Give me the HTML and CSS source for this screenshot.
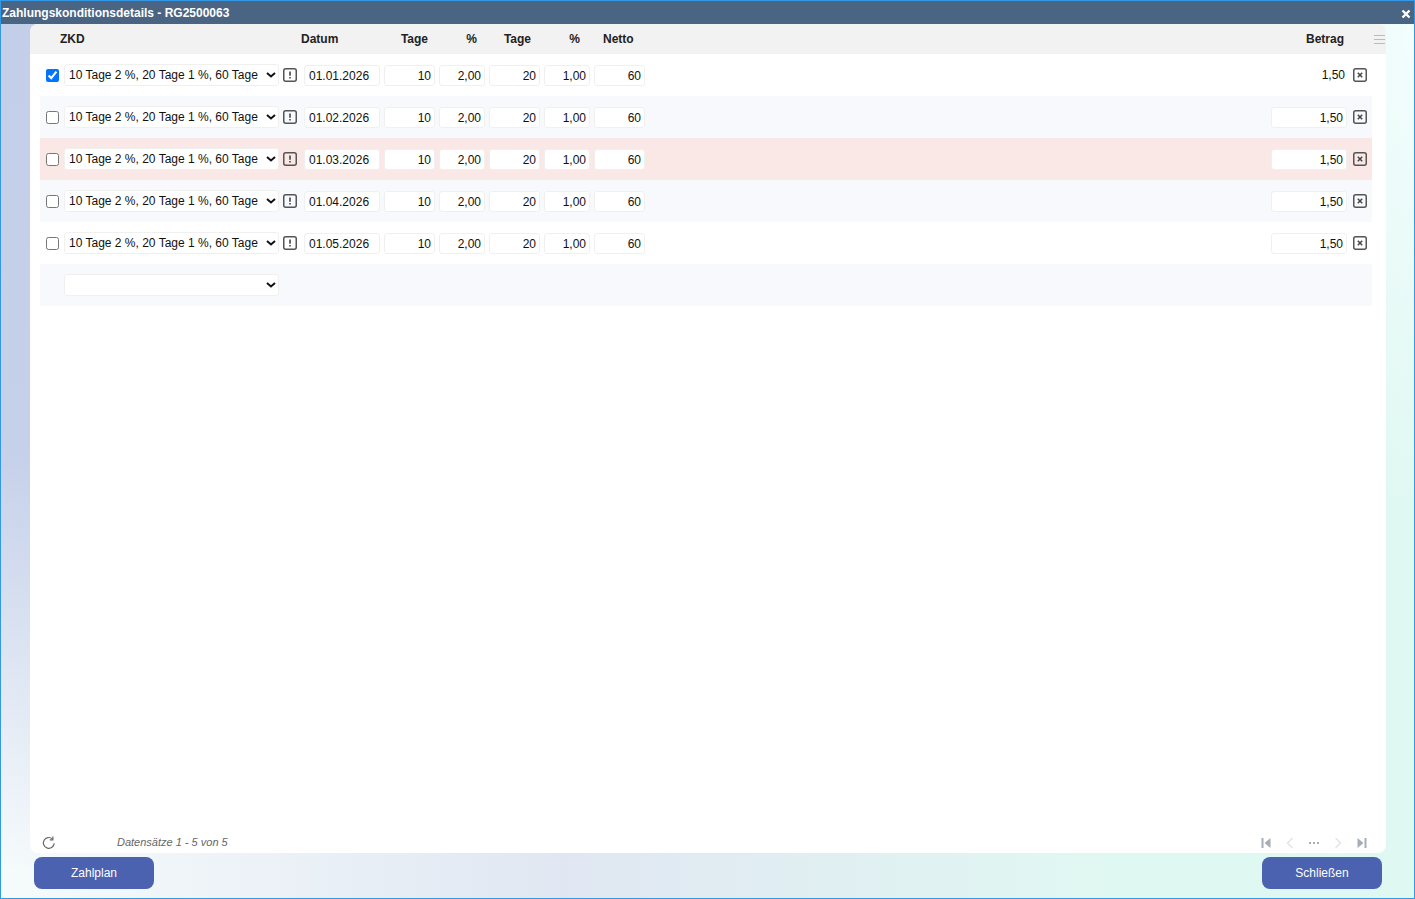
FILE: index.html
```html
<!DOCTYPE html>
<html lang="de">
<head>
<meta charset="utf-8">
<title>Zahlungskonditionsdetails</title>
<link rel="stylesheet" href="styles.css">
</head>
<body>
<div class="window">
  <header class="titlebar">
    <span class="title">Zahlungskonditionsdetails - RG2500063</span>
    <svg class="close" viewBox="0 0 10 10" width="10" height="10"><path d="M1.500 1.500l7 7M8.500 1.500l-7 7" stroke="#fff" stroke-width="2.400" fill="none"/></svg>
  </header>
  <div class="content">
    <main class="panel">
      <div class="head">
        <div class="h-zkd">ZKD</div>
        <div class="h-datum">Datum</div>
        <div class="h-t1">Tage</div>
        <div class="h-p1">%</div>
        <div class="h-t2">Tage</div>
        <div class="h-p2">%</div>
        <div class="h-netto">Netto</div>
        <div class="h-spacer"></div>
        <div class="h-betrag">Betrag</div>
        <div></div>
        <div class="h-menu"><svg viewBox="0 0 11 9" width="11" height="9"><path d="M0 .5h11M0 4.500h11M0 8.500h11" stroke="#bbb" stroke-width="1" fill="none"/></svg></div>
      </div>
      <div class="rows">
        <div class="row">
          <div class="c-check"><input type="checkbox" checked></div>
          <select class="sel"><option>10 Tage 2 %, 20 Tage 1 %, 60 Tage</option></select>
          <div class="c-icon"><svg class="ico" viewBox="0 0 14 14"><rect x=".75" y=".75" width="12.500" height="12.500" rx="2" fill="none" stroke="#555" stroke-width="1.500"/><path d="M7 3.500v4.300M7 9v1.600" stroke="#444" stroke-width="1.600" fill="none"/></svg></div>
          <input class="inp w-date" value="01.01.2026">
          <input class="inp w-t num" value="10">
          <input class="inp w-p num" value="2,00">
          <input class="inp w-t num" value="20">
          <input class="inp w-p num" value="1,00">
          <input class="inp w-t num" value="60">
          <div></div>
          <div class="plain">1,50</div>
          <div class="c-del"><svg class="ico" viewBox="0 0 14 14"><rect x=".75" y=".75" width="12.500" height="12.500" rx="2" fill="none" stroke="#555" stroke-width="1.500"/><path d="M4.800 4.800l4.400 4.400M9.200 4.800l-4.400 4.400" stroke="#444" stroke-width="1.500" fill="none"/></svg></div>
        </div>
        <div class="row alt">
          <div class="c-check"><input type="checkbox"></div>
          <select class="sel"><option>10 Tage 2 %, 20 Tage 1 %, 60 Tage</option></select>
          <div class="c-icon"><svg class="ico" viewBox="0 0 14 14"><rect x=".75" y=".75" width="12.500" height="12.500" rx="2" fill="none" stroke="#555" stroke-width="1.500"/><path d="M7 3.500v4.300M7 9v1.600" stroke="#444" stroke-width="1.600" fill="none"/></svg></div>
          <input class="inp w-date" value="01.02.2026">
          <input class="inp w-t num" value="10">
          <input class="inp w-p num" value="2,00">
          <input class="inp w-t num" value="20">
          <input class="inp w-p num" value="1,00">
          <input class="inp w-t num" value="60">
          <div></div>
          <input class="inp w-date num" value="1,50">
          <div class="c-del"><svg class="ico" viewBox="0 0 14 14"><rect x=".75" y=".75" width="12.500" height="12.500" rx="2" fill="none" stroke="#555" stroke-width="1.500"/><path d="M4.800 4.800l4.400 4.400M9.200 4.800l-4.400 4.400" stroke="#444" stroke-width="1.500" fill="none"/></svg></div>
        </div>
        <div class="row warn">
          <div class="c-check"><input type="checkbox"></div>
          <select class="sel"><option>10 Tage 2 %, 20 Tage 1 %, 60 Tage</option></select>
          <div class="c-icon"><svg class="ico" viewBox="0 0 14 14"><rect x=".75" y=".75" width="12.500" height="12.500" rx="2" fill="none" stroke="#555" stroke-width="1.500"/><path d="M7 3.500v4.300M7 9v1.600" stroke="#444" stroke-width="1.600" fill="none"/></svg></div>
          <input class="inp w-date" value="01.03.2026">
          <input class="inp w-t num" value="10">
          <input class="inp w-p num" value="2,00">
          <input class="inp w-t num" value="20">
          <input class="inp w-p num" value="1,00">
          <input class="inp w-t num" value="60">
          <div></div>
          <input class="inp w-date num" value="1,50">
          <div class="c-del"><svg class="ico" viewBox="0 0 14 14"><rect x=".75" y=".75" width="12.500" height="12.500" rx="2" fill="none" stroke="#555" stroke-width="1.500"/><path d="M4.800 4.800l4.400 4.400M9.200 4.800l-4.400 4.400" stroke="#444" stroke-width="1.500" fill="none"/></svg></div>
        </div>
        <div class="row alt">
          <div class="c-check"><input type="checkbox"></div>
          <select class="sel"><option>10 Tage 2 %, 20 Tage 1 %, 60 Tage</option></select>
          <div class="c-icon"><svg class="ico" viewBox="0 0 14 14"><rect x=".75" y=".75" width="12.500" height="12.500" rx="2" fill="none" stroke="#555" stroke-width="1.500"/><path d="M7 3.500v4.300M7 9v1.600" stroke="#444" stroke-width="1.600" fill="none"/></svg></div>
          <input class="inp w-date" value="01.04.2026">
          <input class="inp w-t num" value="10">
          <input class="inp w-p num" value="2,00">
          <input class="inp w-t num" value="20">
          <input class="inp w-p num" value="1,00">
          <input class="inp w-t num" value="60">
          <div></div>
          <input class="inp w-date num" value="1,50">
          <div class="c-del"><svg class="ico" viewBox="0 0 14 14"><rect x=".75" y=".75" width="12.500" height="12.500" rx="2" fill="none" stroke="#555" stroke-width="1.500"/><path d="M4.800 4.800l4.400 4.400M9.200 4.800l-4.400 4.400" stroke="#444" stroke-width="1.500" fill="none"/></svg></div>
        </div>
        <div class="row">
          <div class="c-check"><input type="checkbox"></div>
          <select class="sel"><option>10 Tage 2 %, 20 Tage 1 %, 60 Tage</option></select>
          <div class="c-icon"><svg class="ico" viewBox="0 0 14 14"><rect x=".75" y=".75" width="12.500" height="12.500" rx="2" fill="none" stroke="#555" stroke-width="1.500"/><path d="M7 3.500v4.300M7 9v1.600" stroke="#444" stroke-width="1.600" fill="none"/></svg></div>
          <input class="inp w-date" value="01.05.2026">
          <input class="inp w-t num" value="10">
          <input class="inp w-p num" value="2,00">
          <input class="inp w-t num" value="20">
          <input class="inp w-p num" value="1,00">
          <input class="inp w-t num" value="60">
          <div></div>
          <input class="inp w-date num" value="1,50">
          <div class="c-del"><svg class="ico" viewBox="0 0 14 14"><rect x=".75" y=".75" width="12.500" height="12.500" rx="2" fill="none" stroke="#555" stroke-width="1.500"/><path d="M4.800 4.800l4.400 4.400M9.200 4.800l-4.400 4.400" stroke="#444" stroke-width="1.500" fill="none"/></svg></div>
        </div>
        <div class="row alt">
          <div></div>
          <select class="sel"><option></option></select>
        </div>
      </div>
      <footer class="pager">
        <svg class="refresh" viewBox="0 0 14 14" width="14" height="14"><path d="M12.200 7.200A5.400 5.400 0 1 1 10.400 2.900" fill="none" stroke="#666" stroke-width="1.200"/><path d="M10.900 .6v3.200h-3.200" fill="none" stroke="#666" stroke-width="1.200"/></svg>
        <span class="info">Datensätze 1 - 5 von 5</span>
        <nav class="nav">
          <span class="nav-cell"><svg viewBox="0 0 10 12" width="10" height="12"><path d="M0.500 1h2v10h-2zM9.500 1v10l-6-5z" fill="#a6adb6"/></svg></span>
          <span class="nav-cell"><svg viewBox="0 0 8 12" width="8" height="12"><path d="M6.500 1l-5 5 5 5" fill="none" stroke="#dfe2e6" stroke-width="1.300"/></svg></span>
          <span class="nav-cell"><svg viewBox="0 0 10 4" width="10" height="4"><path d="M0 1h2v2h-2zM4 1h2v2h-2zM8 1h2v2h-2z" fill="#a6adb6"/></svg></span>
          <span class="nav-cell"><svg viewBox="0 0 8 12" width="8" height="12"><path d="M1.500 1l5 5-5 5" fill="none" stroke="#dfe2e6" stroke-width="1.300"/></svg></span>
          <span class="nav-cell"><svg viewBox="0 0 10 12" width="10" height="12"><path d="M9.500 1h-2v10h2zM0.500 1v10l6-5z" fill="#a6adb6"/></svg></span>
        </nav>
      </footer>
    </main>
    <div class="actions">
      <button class="btn" type="button">Zahlplan</button>
      <button class="btn" type="button">Schließen</button>
    </div>
  </div>
</div>
</body>
</html>
```

FILE: styles.css
```css
* { box-sizing: border-box; }
html, body { margin: 0; height: 100%; }
body {
  font-family: "Liberation Sans", Arial, sans-serif;
  font-size: 12px;
  color: #111;
  overflow: hidden;
}
.window {
  height: 899px;
  border: 1px solid #3399e6;
  display: flex;
  flex-direction: column;
  background-color: #e0f8f2;
  background-image:
    linear-gradient(180deg, #c3cee8 0%, #c5d0e9 50%, rgba(197,208,233,0) 97%),
    radial-gradient(ellipse 120px 520px at 100% 0, #f4fefe 0%, rgba(244,254,254,0) 100%),
    linear-gradient(90deg, #f6fbfc 0%, #e0e7f2 40%, #e0f8f2 78%, #e0f8f2 100%);
  background-size: 40px 100%, 100% 100%, 100% 100%;
  background-repeat: no-repeat;
}
.titlebar {
  height: 23px;
  flex: none;
  background: #4a6484;
  color: #fff;
  display: flex;
  align-items: center;
  justify-content: space-between;
  padding: 0 3px 0 1px;
}
.title { font-weight: bold; font-size: 12px; }
.close { display: block; margin-top: 2px; }
.content {
  flex: 1;
  min-height: 0;
  display: flex;
  flex-direction: column;
  padding: 0 28px 9px 29px;
}
.panel {
  flex: 1;
  min-height: 0;
  background: #fff;
  border-radius: 8px;
  display: flex;
  flex-direction: column;
  overflow: hidden;
}
.head, .row {
  display: grid;
  align-items: center;
}
.head {
  height: 30px;
  flex: none;
  padding-left: 10px;
  background: #f2f2f2;
  font-weight: bold;
  color: #222;
  grid-template-columns: 24px 215px 25px 80px 55px 50px 55px 50px 55px 1fr 82px 19px 14px;
}
.h-zkd { grid-column: 1 / 3; padding-left: 20px; }
.h-datum { grid-column: 3 / 5; padding-left: 22px; }
.h-t1 { text-align: right; padding-right: 11px; }
.h-p1 { text-align: right; padding-right: 12px; }
.h-t2 { text-align: right; padding-right: 13px; }
.h-p2 { text-align: right; padding-right: 14px; }
.h-netto { padding-left: 9px; }
.h-betrag { text-align: right; padding-right: 9px; }
.h-menu { display: flex; }
.h-menu svg { display: block; margin-left: 2px; }
.rows {
  flex: 1;
  min-height: 0;
  padding: 0 14px 0 10px;
}
.row {
  height: 42px;
  grid-template-columns: 24px 215px 25px 80px 55px 50px 55px 50px 55px 1fr 82px 19px;
}
.alt { background: #f7f9fd; }
.warn { background: #f9e8e6; }
.c-check { padding-left: 6px; display: flex; }
.c-check input { margin: 0; width: 13px; height: 13px; display: block; }
.sel {
  appearance: none;
  -webkit-appearance: none;
  width: 215px;
  height: 22px;
  font: 12px "Liberation Sans", Arial, sans-serif;
  color: #111;
  border: 1px solid #f0f0f0;
  border-radius: 3px;
  padding: 0 18px 0 4px;
  background: #fff url("data:image/svg+xml,%3Csvg xmlns='http://www.w3.org/2000/svg' width='10' height='6'%3E%3Cpath d='M1 1l4 3.500 4-3.500' fill='none' stroke='%23111' stroke-width='2'/%3E%3C/svg%3E") no-repeat right 2px center;
}
.c-icon { padding-left: 4px; display: flex; }
.c-del { display: flex; }
.ico { width: 14px; height: 14px; display: block; }
.inp {
  height: 21px;
  font: 12px "Liberation Sans", Arial, sans-serif;
  color: #111;
  background: #fff;
  border: 1px solid #f0f0f0;
  border-radius: 3px;
  padding: 1px 3px 0 4px;
  outline: none;
}
.w-date { width: 76px; }
.w-t { width: 51px; }
.w-p { width: 46px; }
.num { text-align: right; }
.plain { text-align: right; padding-right: 8px; }
.pager {
  flex: none;
  height: 24px;
  display: flex;
  align-items: center;
  padding: 3px 12px 0 12px;
}
.refresh { display: block; }
.info {
  margin-left: 61px;
  margin-bottom: 2px;
  font-size: 11px;
  font-style: italic;
  color: #666;
}
.nav {
  margin-left: auto;
  display: flex;
  align-items: center;
}
.nav-cell {
  width: 24px;
  display: flex;
  justify-content: center;
}
.nav svg { display: block; }
.actions {
  flex: none;
  display: flex;
  justify-content: space-between;
  padding: 4px 4px 0 4px;
}
.btn {
  width: 120px;
  height: 32px;
  border: 0;
  border-radius: 8px;
  background: #4a62b0;
  color: #fff;
  font: 12px "Liberation Sans", Arial, sans-serif;
}
```
